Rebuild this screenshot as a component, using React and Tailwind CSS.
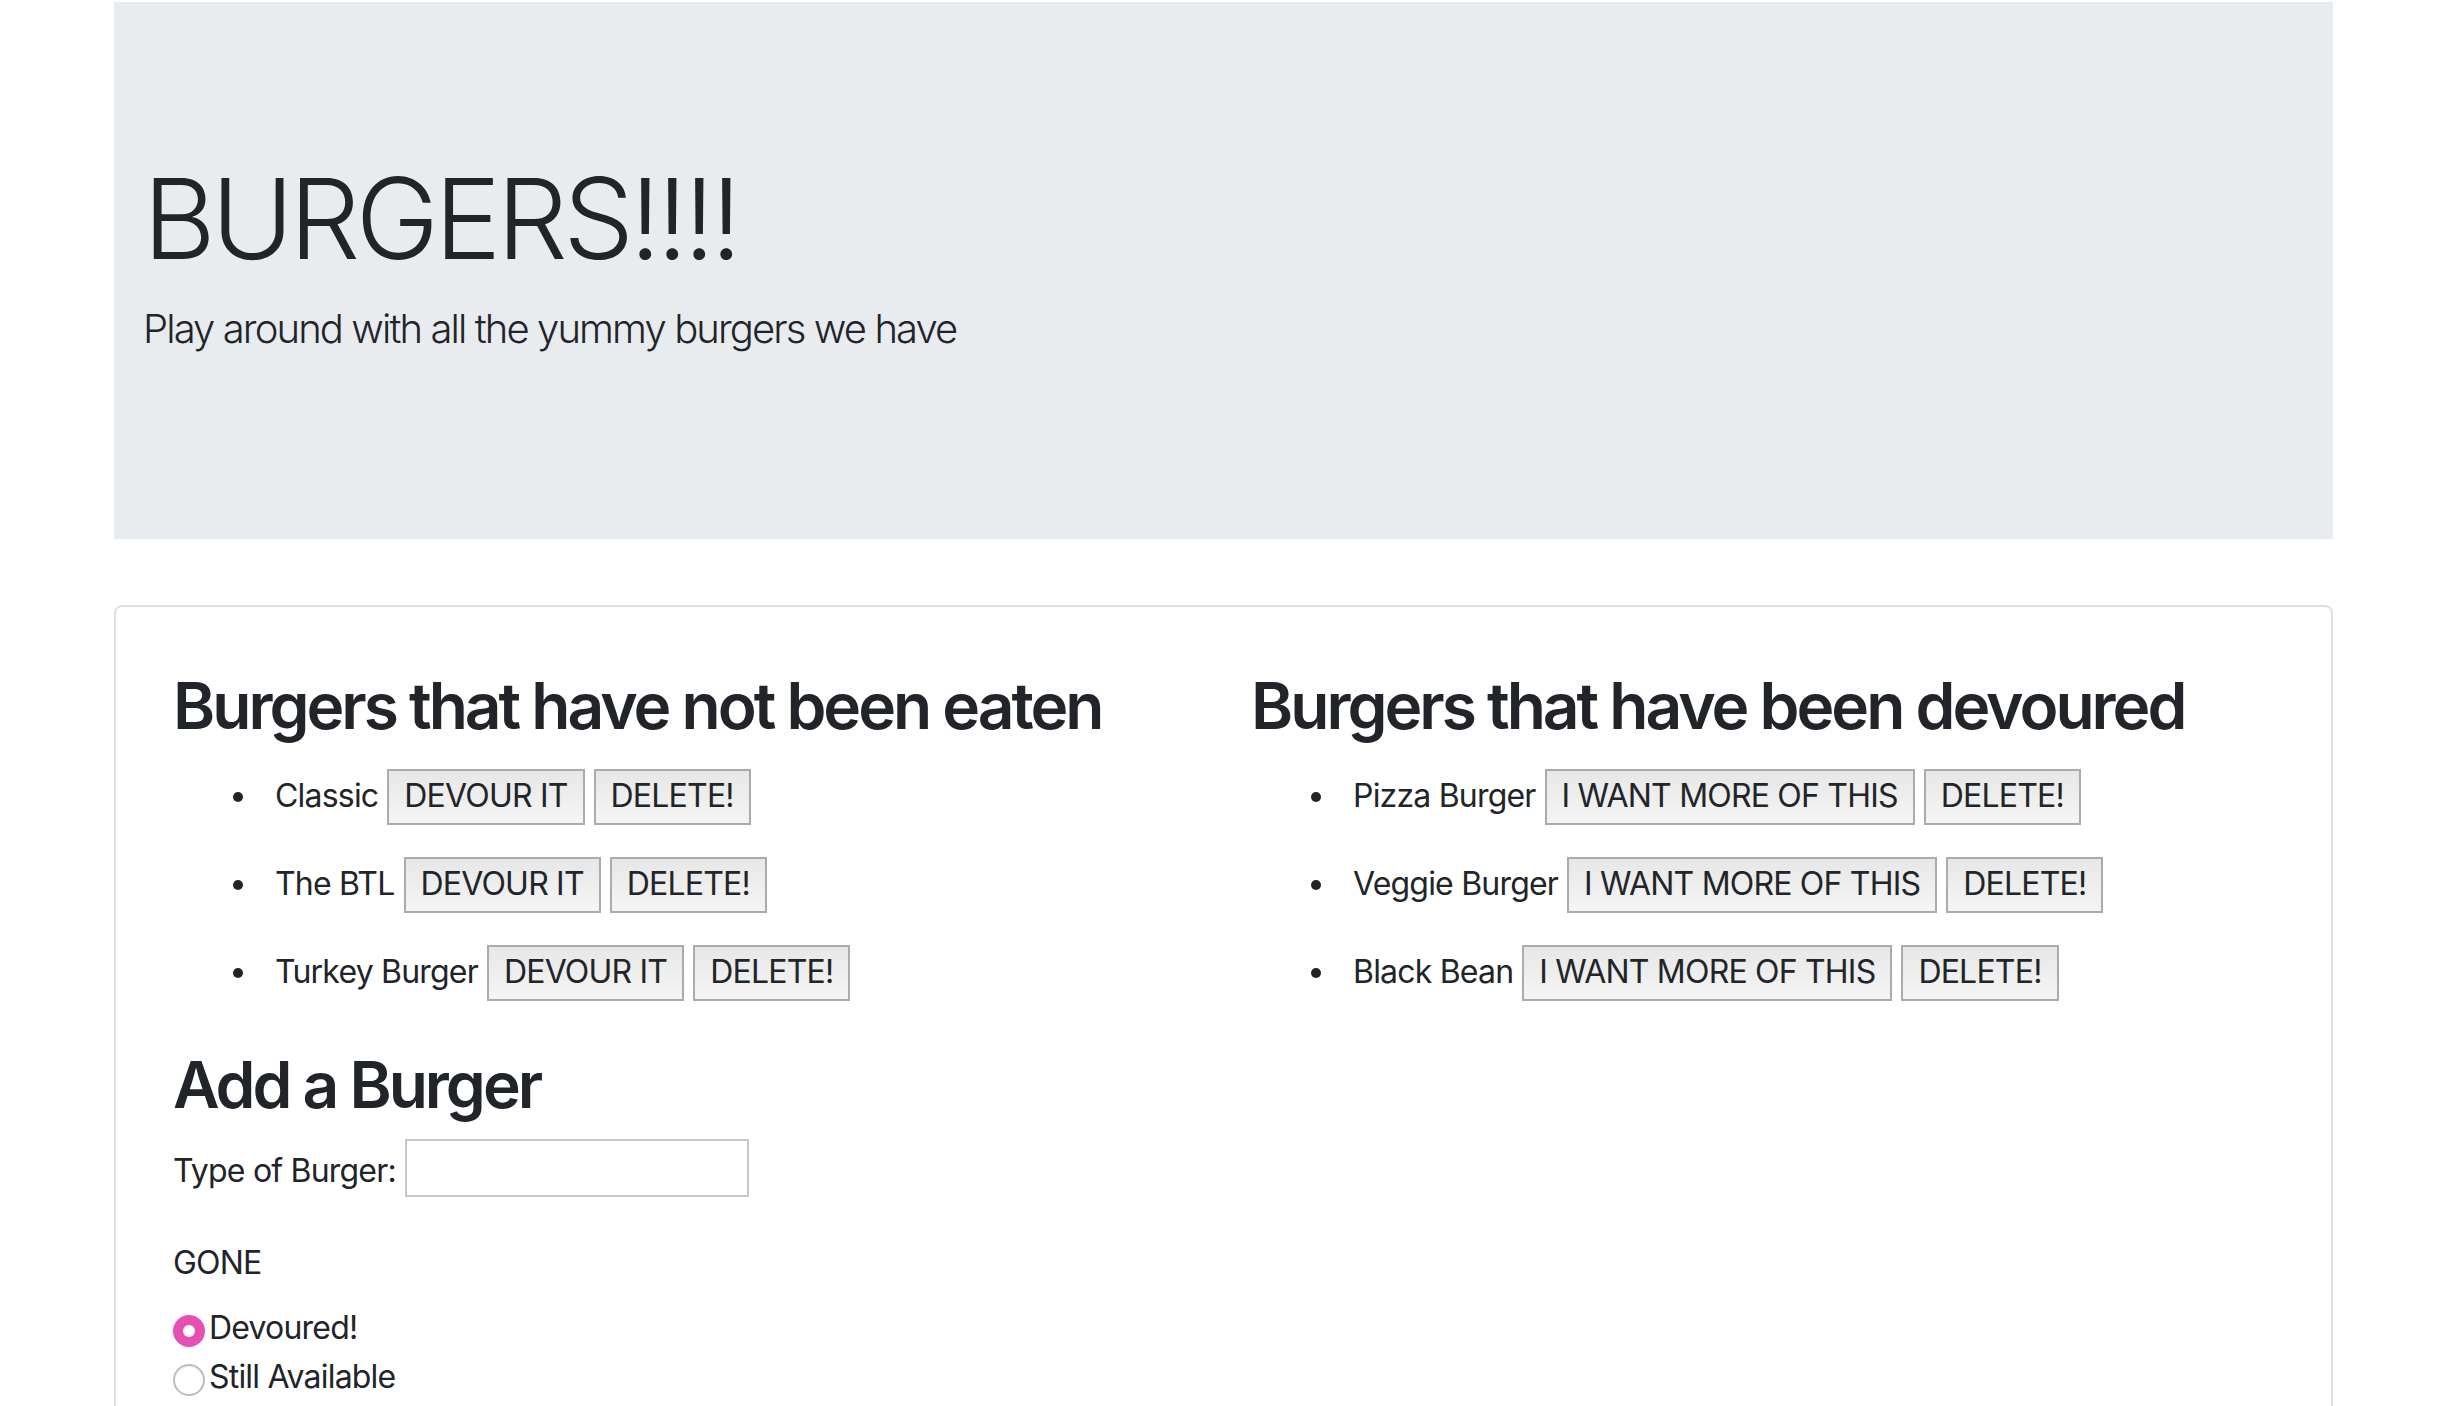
import React from "react";

const unEaten = ["Classic", "The BTL", "Turkey Burger"];
const devoured = ["Pizza Burger", "Veggie Burger", "Black Bean"];

function Btn({ children }) {
  return (
    <button
      type="button"
      className="ml-[9px] shrink-0 whitespace-nowrap border-2 border-[#ababab] bg-linear-to-b from-[#e7e7e7] to-[#f5f5f5] px-[15px] pt-[6px] pb-[8px] text-[32px] leading-[38px] tracking-[-0.8px] text-[#212529]"
    >
      {children}
    </button>
  );
}

function Item({ name, action }) {
  return (
    <li className="flex h-[56px] items-baseline">
      <span className="ml-[60px] mr-[32px] h-[10px] w-[10px] shrink-0 self-center rounded-full bg-[#212529]" />
      <span className="whitespace-nowrap leading-[38px]">{name}</span>
      <Btn>{action}</Btn>
      <Btn>DELETE!</Btn>
    </li>
  );
}

export default function App() {
  return (
    <div
      className="min-h-screen bg-white text-[32px] leading-[48px] tracking-[-0.8px] text-[#212529]"
      style={{ fontFamily: "Inter, 'Noto Sans', sans-serif" }}
    >
      <div className="ml-[114px] w-[2219px]">
        {/* Jumbotron */}
        <div className="mt-[2px] flex h-[537px] flex-col bg-[#e9ecef] pl-[29px] pt-[149px]">
          <h1 className="mb-[14px] text-[112px] font-light leading-[134px] tracking-[-4.5px]">
            BURGERS!!!!
          </h1>
          <p className="text-[40px] font-light leading-[60px] tracking-[-1.9px]">
            Play around with all the yummy burgers we have
          </p>
        </div>

        {/* Card */}
        <div className="mt-[66px] rounded-[8px] border-2 border-[#dfdfdf] pb-[200px] pl-[57px] pt-[60px]">
          <div className="grid grid-cols-[1078px_1fr] items-start">
            <div>
              <h2 className="text-[64px] font-semibold leading-[77px] tracking-[-3px]">
                Burgers that have not been eaten
              </h2>
              <ul className="mt-[25px] flex flex-col gap-[32px]">
                {unEaten.map((n) => (
                  <Item key={n} name={n} action="DEVOUR IT" />
                ))}
              </ul>

              <h2 className="mt-[45px] text-[64px] font-semibold leading-[77px] tracking-[-3px]">
                Add a Burger
              </h2>
              <div className="mt-[16px] flex items-start">
                <label className="mt-[8px] whitespace-nowrap">Type of Burger:</label>
                <input
                  type="text"
                  className="ml-[9px] h-[58px] w-[344px] border-2 border-[#c6c6c6] bg-white outline-none"
                />
              </div>

              <p className="mt-[42px]">GONE</p>
              <div className="mt-[17px] flex flex-col">
                <label className="flex h-[49px] items-start">
                  <span className="mt-[11px] flex h-[32px] w-[32px] shrink-0 items-center justify-center rounded-full bg-[#e64fb3]">
                    <span className="h-[12px] w-[12px] rounded-full bg-white" />
                  </span>
                  <span className="ml-[4px]">Devoured!</span>
                </label>
                <label className="flex h-[49px] items-start">
                  <span className="mt-[11px] h-[32px] w-[32px] shrink-0 rounded-full border-2 border-[#bdbdbd] bg-white shadow-[inset_0_1px_1px_rgba(0,0,0,0.08)]" />
                  <span className="ml-[4px]">Still Available</span>
                </label>
              </div>
            </div>

            <div>
              <h2 className="text-[64px] font-semibold leading-[77px] tracking-[-3px]">
                Burgers that have been devoured
              </h2>
              <ul className="mt-[25px] flex flex-col gap-[32px]">
                {devoured.map((n) => (
                  <Item key={n} name={n} action="I WANT MORE OF THIS" />
                ))}
              </ul>
            </div>
          </div>
        </div>
      </div>
    </div>
  );
}
